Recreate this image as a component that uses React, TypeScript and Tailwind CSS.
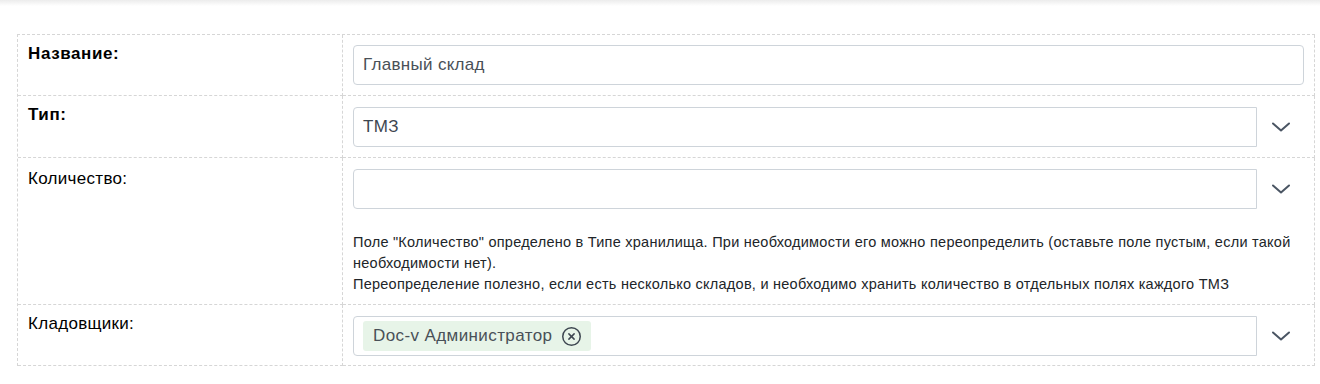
import React from "react";
import { CircleX } from "lucide-react";

const font = { fontFamily: '"Liberation Sans", Arial, sans-serif' };

const Chevron = () => (
  <svg width="18" height="10" viewBox="0 0 18 10" fill="none">
    <path d="M1 1.5 L9 8.5 L17 1.5" stroke="#4a5563" strokeWidth="2" strokeLinecap="round" strokeLinejoin="round" />
  </svg>
);

const SelectBox = ({ children }: { children?: React.ReactNode }) => (
  <div className="flex items-center">
    <div className="flex-1 h-[40px] border border-[#ced4da] rounded-l-[4px] flex items-center pl-[9px] text-[17px] tracking-[0.3px] text-[#3d4650]">
      {children}
    </div>
    <div className="w-[47px] flex items-center justify-center">
      <Chevron />
    </div>
  </div>
);

const Label = ({ children, bold, pt = "pt-[8px]" }: { children: React.ReactNode; bold?: boolean; pt?: string }) => (
  <div
    className={`border-r border-b border-dashed border-[#d6d6d6] px-[10px] ${pt} text-[17px] leading-[22px] text-black ${
      bold ? "font-bold tracking-[0.6px]" : "tracking-[0.3px]"
    }`}
  >
    {children}
  </div>
);

const Value = ({ children, className = "" }: { children: React.ReactNode; className?: string }) => (
  <div className={`border-r border-b border-dashed border-[#d6d6d6] px-[10px] ${className}`}>{children}</div>
);

export default function App() {
  return (
    <div className="w-[1320px] h-[384px] bg-white" style={font}>
      <div className="h-[6px] bg-gradient-to-b from-[#ececec] to-white" />
      <div className="ml-[17px] mt-[28px] w-[1298px] grid grid-cols-[325px_1fr] border-l border-t border-dashed border-[#d6d6d6]">
        <Label bold>Название:</Label>
        <Value className="pt-[10px] pb-[10px]">
          <div className="h-[40px] border border-[#ced4da] rounded-[4px] flex items-center pl-[9px] text-[17px] tracking-[0.3px] text-[#495057]">
            Главный склад
          </div>
        </Value>

        <Label bold>Тип:</Label>
        <Value className="pt-[11px] pb-[10px]">
          <SelectBox>ТМЗ</SelectBox>
        </Value>

        <Label pt="pt-[10px]">Количество:</Label>
        <Value className="pt-[11px] pb-[9px]">
          <SelectBox />
          <div className="mt-[23px] text-[14.5px] leading-[21px] tracking-[0.25px] text-[#212529]">
            Поле "Количество" определено в Типе хранилища. При необходимости его можно переопределить (оставьте поле пустым, если такой необходимости нет).
            <br />
            Переопределение полезно, если есть несколько складов, и необходимо хранить количество в отдельных полях каждого ТМЗ
          </div>
        </Value>

        <Label>Кладовщики:</Label>
        <Value className="pt-[11px] pb-[9px]">
          <SelectBox>
            <span className="h-[30px] bg-[#e7f4e8] rounded-[3px] flex items-center gap-[9px] pl-[10px] pr-[9px] text-[17px] tracking-[0.4px] text-[#495057]">
              Doc-v Администратор
              <CircleX size={21} strokeWidth={1.7} color="#3d4650" />
            </span>
          </SelectBox>
        </Value>
      </div>
    </div>
  );
}
